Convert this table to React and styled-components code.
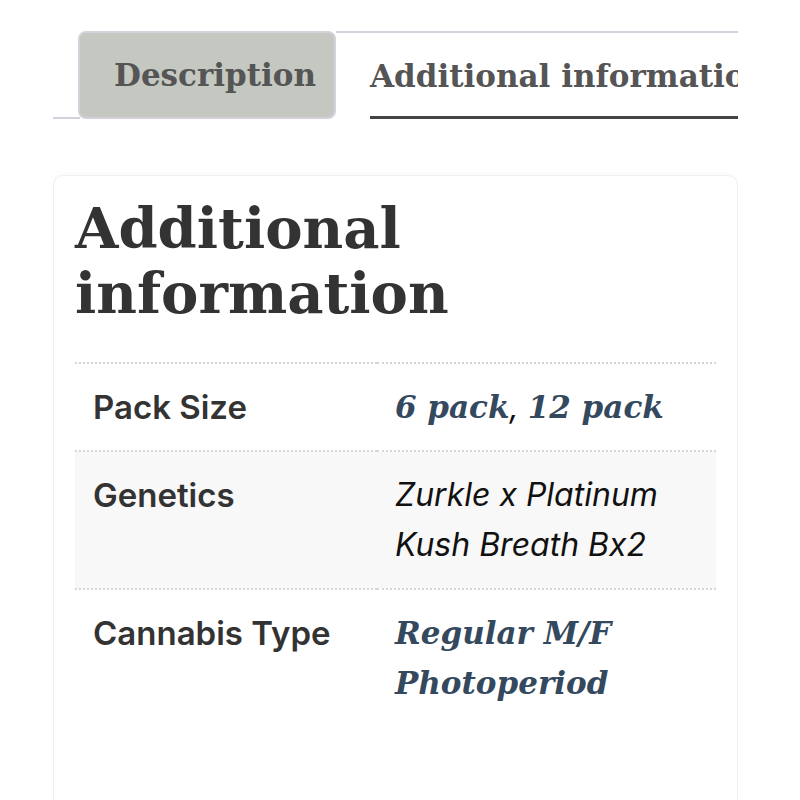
import React from 'react';
import styled, { createGlobalStyle } from 'styled-components';

const GlobalStyle = createGlobalStyle`
  html, body {
    margin: 0;
    padding: 0;
    background: #fff;
  }
  body {
    font-family: Inter, "Liberation Sans", sans-serif;
  }
`;

const Page = styled.div`
  width: 685px;
  margin-left: 53px;
  overflow: hidden;
  padding-top: 31px;
  padding-bottom: 40px;
`;

const TabList = styled.ul`
  display: flex;
  margin: 0;
  padding: 0;
  list-style: none;
  white-space: nowrap;
`;

const TabEdge = styled.li`
  flex: none;
  width: 27px;
  align-self: flex-end;
  border-bottom: 2px solid #d4d1da;
  margin-right: -2px;
`;

const Tab = styled.li`
  flex: none;
  height: 88px;
  box-sizing: border-box;
  display: flex;
  align-items: center;
  font-family: "DejaVu Serif", Georgia, serif;
  font-weight: 700;
  font-size: 31px;
  color: #555;
  background: ${(p) => (p.active ? '#fff' : '#c4c8c1')};
  border: 2px solid #d4d1da;
  border-width: ${(p) => (p.active ? '2px 0 0 0' : '2px')};
  border-radius: ${(p) => (p.active ? '0' : '8px')};
  padding: ${(p) => (p.active ? '0 0 0 34px' : '0 18px 0 34px')};
`;

const TabLabel = styled.span`
  display: flex;
  align-items: center;
  height: 100%;
  box-sizing: border-box;
  padding-top: ${(p) => (p.underline ? '3px' : '0')};
  border-bottom: ${(p) => (p.underline ? '3px solid #444' : 'none')};
`;

const Card = styled.section`
  margin-top: 56px;
  background: #fff;
  border-radius: 10px;
  border: 1px solid #f0f0f0;
  box-shadow: 0 0 6px rgba(0, 0, 0, 0.04);
  padding: 20px 21px 120px 21px;
`;

const Heading = styled.h2`
  margin: 0 0 36px 0;
  font-family: "DejaVu Serif", Georgia, serif;
  font-weight: 700;
  font-size: 56px;
  line-height: 65px;
  color: #333;
`;

const Table = styled.table`
  width: 100%;
  border-collapse: collapse;
  border-top: 2px dotted #d6d6d6;
`;

const Row = styled.tr`
  background: ${(p) => (p.shaded ? '#f8f8f8' : 'transparent')};
  border-bottom: 2px dotted #d6d6d6;
  &:last-child {
    border-bottom: none;
  }
`;

const Label = styled.th`
  width: 266px;
  padding: 18px 18px;
  text-align: left;
  vertical-align: top;
  font-family: Inter, "Liberation Sans", sans-serif;
  font-weight: 600;
  font-size: 33px;
  line-height: 50px;
  color: #333;
`;

const Value = styled.td`
  padding: 18px 18px;
  vertical-align: top;
  font-family: Inter, "Liberation Sans", sans-serif;
  font-style: italic;
  font-size: 32px;
  line-height: 50px;
  color: #111;
`;

const Link = styled.a`
  font-family: "DejaVu Serif", Georgia, serif;
  font-weight: 700;
  font-style: italic;
  font-size: 31px;
  color: #34495e;
  text-decoration: none;
`;

const rows = [
  { label: 'Pack Size', links: ['6 pack', '12 pack'] },
  { label: 'Genetics', text: 'Zurkle x Platinum Kush Breath Bx2' },
  { label: 'Cannabis Type', links: ['Regular M/F Photoperiod'] },
];

export default function App() {
  return (
    <>
      <GlobalStyle />
      <Page>
        <TabList>
          <TabEdge />
          <Tab>
            <TabLabel>Description</TabLabel>
          </Tab>
          <Tab active>
            <TabLabel underline>Additional information</TabLabel>
          </Tab>
        </TabList>
        <Card>
          <Heading>Additional information</Heading>
          <Table>
            <tbody>
              {rows.map((row, i) => (
                <Row key={row.label} shaded={i % 2 === 1}>
                  <Label>{row.label}</Label>
                  <Value>
                    {row.text
                      ? row.text
                      : row.links.map((l, j) => (
                          <React.Fragment key={l}>
                            {j > 0 && ', '}
                            <Link href="#">{l}</Link>
                          </React.Fragment>
                        ))}
                  </Value>
                </Row>
              ))}
            </tbody>
          </Table>
        </Card>
      </Page>
    </>
  );
}
